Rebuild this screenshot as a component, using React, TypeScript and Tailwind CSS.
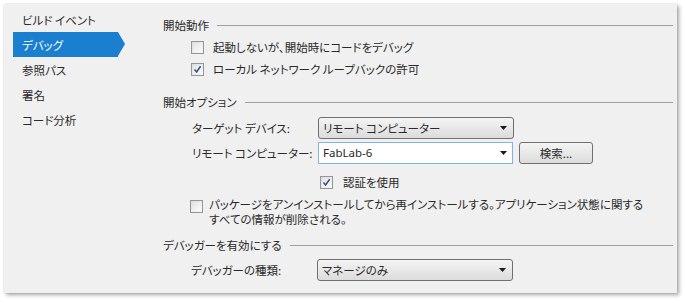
import type { ReactNode } from 'react'

const font = "[font-family:'Noto_Sans_CJK_JP','Noto_Sans',sans-serif] [font-feature-settings:'palt']"

function Check({ checked = false }: { checked?: boolean }) {
  return (
    <div className="w-[13px] h-[13px] border border-[#969696] bg-gradient-to-br from-[#dcdcdc] to-[#f7f7f7] p-[1px] shrink-0">
      <div className="w-full h-full bg-gradient-to-br from-[#e3e3e3] to-[#fbfbfb] flex items-center justify-center">
        {checked && (
          <svg width="9" height="9" viewBox="0 0 9 9">
            <path d="M1.5 4.6 L3.6 7 L7.6 1.2" fill="none" stroke="#3b4f8a" strokeWidth="1.5" />
          </svg>
        )}
      </div>
    </div>
  )
}

function Arrow() {
  return (
    <svg width="7" height="4" viewBox="0 0 7 4" className="shrink-0">
      <path d="M0 0 H7 L3.5 4 Z" fill="#1a1a1a" />
    </svg>
  )
}

function Select({ value }: { value: string }) {
  return (
    <div className="w-[196px] h-[22px] border border-[#707070] rounded-[3px] bg-gradient-to-b from-[#f4f4f4] to-[#dcdcdc] flex items-center justify-between pl-[4px] pr-[6px]">
      <span>{value}</span>
      <Arrow />
    </div>
  )
}

function Header({ children }: { children: ReactNode }) {
  return (
    <div className="h-[16px] flex items-center gap-[8px] pr-[4px]">
      <span>{children}</span>
      <div className="flex-1 h-px bg-[#a0a0a0] mt-[1px]" />
    </div>
  )
}

const nav = ['ビルド イベント', 'デバッグ', '参照パス', '署名', 'コード分析']

export default function App() {
  return (
    <div className={`w-[685px] h-[303px] bg-white pl-[4px] pt-[4px] text-[11.5px] leading-[16px] text-[#2a2a2a] ${font}`}>
      <div className="w-[673px] h-[289px] bg-[#f0f0f0] flex shadow-[0_0_1px_rgba(0,0,0,0.2),2px_2px_4px_rgba(0,0,0,0.35)]">
        <div className="w-[159px] shrink-0 pl-[9px] pt-[3px]">
          {nav.map((n, i) => (
            <div
              key={n}
              className={`relative w-[105px] h-[25px] flex items-center pl-[9px] ${i === 1 ? 'bg-[#1b7fd0] text-white' : ''}`}
            >
              {n}
              {i === 1 && (
                <div className="absolute -right-[7px] top-0 w-0 h-0 border-l-[7px] border-l-[#1b7fd0] border-y-[12.5px] border-y-transparent" />
              )}
            </div>
          ))}
        </div>
        <div className="flex-1 flex flex-col pt-[13px]">
          <Header>開始動作</Header>
          <div className="mt-[6px] h-[16px] flex items-center pl-[28px] gap-[9px]">
            <Check />
            <span>起動しないが、開始時にコードをデバッグ</span>
          </div>
          <div className="mt-[6px] h-[16px] flex items-center pl-[28px] gap-[9px]">
            <Check checked />
            <span>ローカル ネットワーク ループバックの許可</span>
          </div>
          <div className="mt-[17px]">
            <Header>開始オプション</Header>
          </div>
          <div className="mt-[7px] h-[22px] flex items-center pl-[29px]">
            <span className="w-[126px]">ターゲット デバイス:</span>
            <Select value="リモート コンピューター" />
          </div>
          <div className="mt-[3px] h-[22px] flex items-center pl-[29px]">
            <span className="w-[126px]">リモート コンピューター:</span>
            <div className="w-[195px] h-[22px] border border-[#7eb4ea] bg-white flex items-center justify-between pl-[4px] pr-[5px]">
              <span className="[font-family:'Noto_Sans',sans-serif] text-[11.5px]">FabLab-6</span>
              <Arrow />
            </div>
            <div className="ml-[6px] w-[74px] h-[22px] border border-[#707070] rounded-[3px] bg-gradient-to-b from-[#f4f4f4] to-[#dcdcdc] flex items-center justify-center">
              検索...
            </div>
          </div>
          <div className="mt-[10px] h-[16px] flex items-center pl-[157px] gap-[10px]">
            <Check checked />
            <span>認証を使用</span>
          </div>
          <div className="mt-[7px] flex items-start pl-[27px] gap-[6px] leading-[15px]">
            <div className="mt-[3px]">
              <Check />
            </div>
            <div className="flex flex-col">
              <span>パッケージをアンインストールしてから再インストールする。アプリケーション状態に関する</span>
              <span>すべての情報が削除される。</span>
            </div>
          </div>
          <div className="mt-[10px]">
            <Header>デバッガーを有効にする</Header>
          </div>
          <div className="mt-[6px] h-[22px] flex items-center pl-[28px]">
            <span className="w-[126px]">デバッガーの種類:</span>
            <Select value="マネージのみ" />
          </div>
        </div>
      </div>
    </div>
  )
}
